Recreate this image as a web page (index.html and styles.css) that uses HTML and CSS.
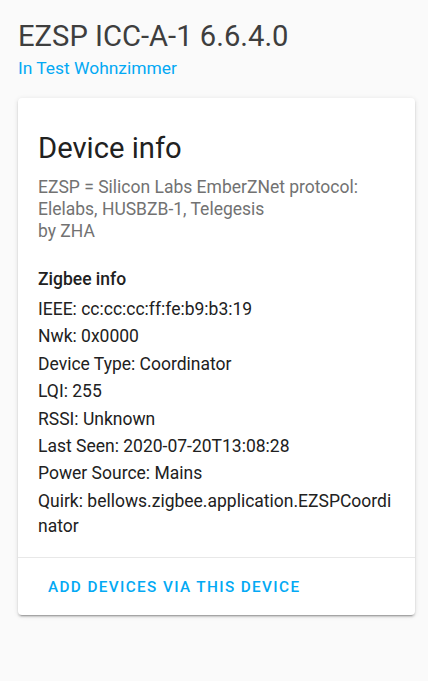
FILE: index.html
```html
<!DOCTYPE html>
<html>
<head>
<meta charset="utf-8">
<link rel="stylesheet" href="styles.css">
</head>
<body>
<div class="page">
  <div class="header">
    <h1 class="title">EZSP ICC-A-1 6.6.4.0</h1>
    <a class="area">In Test Wohnzimmer</a>
  </div>
  <div class="card">
    <div class="card-content">
      <h2 class="card-title">Device info</h2>
      <div class="model">EZSP = Silicon Labs EmberZNet protocol: Elelabs, HUSBZB-1, Telegesis</div>
      <div class="manuf">by ZHA</div>
      <div class="zigbee">
        <div class="zb-title">Zigbee info</div>
        <div class="row">IEEE: cc:cc:cc:ff:fe:b9:b3:19</div>
        <div class="row">Nwk: 0x0000</div>
        <div class="row">Device Type: Coordinator</div>
        <div class="row">LQI: 255</div>
        <div class="row">RSSI: Unknown</div>
        <div class="row">Last Seen: 2020-07-20T13:08:28</div>
        <div class="row">Power Source: Mains</div>
        <div class="row break">Quirk: bellows.zigbee.application.EZSPCoordinator</div>
      </div>
    </div>
    <div class="card-actions">
      <button class="btn">Add devices via this device</button>
    </div>
  </div>
</div>
</body>
</html>
```
FILE: styles.css
```css
html, body {
  margin: 0;
  padding: 0;
  background: #fafafa;
  font-family: Roboto, "Noto Sans", sans-serif;
}
.page {
  padding: 18px 13px 18px 18px;
}
.header {
  display: flex;
  flex-direction: column;
}
.title {
  margin: 0;
  font-size: 29.2px;
  font-weight: 400;
  line-height: 36px;
  color: #3e3e3e;
}
.area {
  padding-top: 4px;
  font-size: 17.4px;
  line-height: 21px;
  color: #03a9f4;
}
.card {
  margin-top: 19px;
  background: #fff;
  border-radius: 4px;
  box-shadow: 0 2px 2px 0 rgba(0,0,0,0.14), 0 1px 5px 0 rgba(0,0,0,0.12), 0 3px 1px -2px rgba(0,0,0,0.2);
}
.card-content {
  padding: 32px 20px 16px 20px;
}
.card-title {
  margin: 0 0 10px;
  font-size: 29.2px;
  font-weight: 400;
  line-height: 36px;
  color: #212121;
}
.model, .manuf {
  font-size: 17.5px;
  line-height: 22px;
  color: #727272;
}
.zigbee {
  margin-top: 25px;
  color: #212121;
  font-size: 17.5px;
}
.zb-title {
  font-weight: 500;
  line-height: 25px;
  margin-bottom: 5px;
}
.row {
  line-height: 25px;
  padding-bottom: 2.4px;
}
.break {
  word-break: break-all;
}
.card-actions {
  border-top: 1px solid #e8e8e8;
  padding: 11px 16px 10px 22px;
}
.btn {
  background: none;
  border: 0;
  padding: 0 8px;
  height: 36px;
  font-family: Roboto, sans-serif;
  font-size: 15.3px;
  font-weight: 500;
  letter-spacing: 1.37px;
  text-transform: uppercase;
  color: #03a9f4;
}
```
